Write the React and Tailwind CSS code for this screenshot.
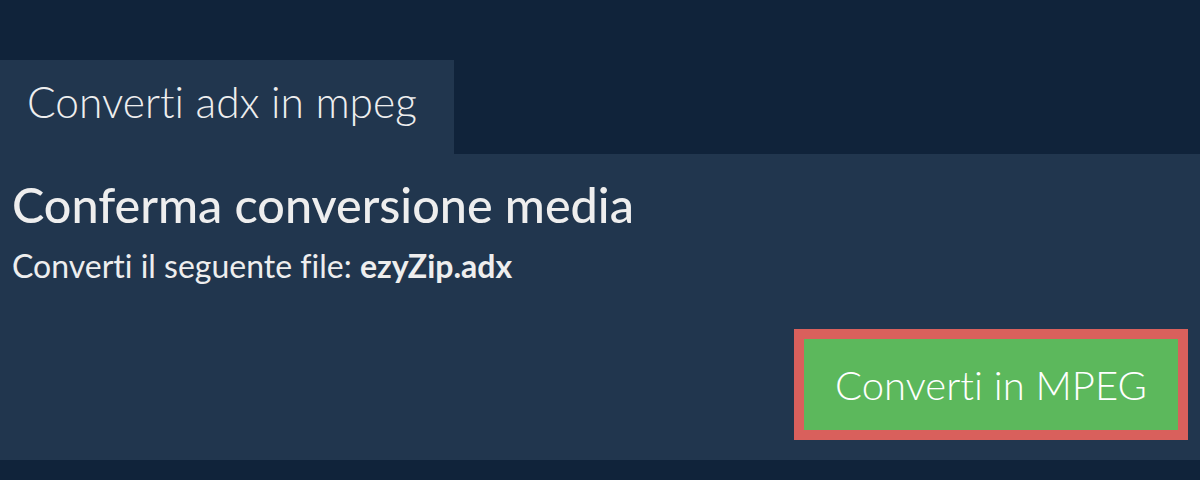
export default function App() {
  return (
    <div className="w-[1200px] h-[480px] bg-[#10233a] pt-[60px] font-['Lato',sans-serif] [font-variant-ligatures:none] text-[#eeeeee] overflow-hidden">
      <div className="flex">
        <div className="w-[454px] h-[94px] bg-[#21364e] pl-[27px] pt-[14px] text-[42.5px] font-light leading-[56px]">
          Converti adx in mpeg
        </div>
      </div>
      <div className="bg-[#21364e] h-[306px] px-[12px] pt-[20px]">
        <h1 className="text-[48.5px] font-medium leading-[60px]">Conferma conversione media</h1>
        <p className="mt-[12px] text-[32px] font-normal leading-[40px]">
          Converti il seguente file: <span className="font-bold">ezyZip.adx</span>
        </p>
        <div className="flex justify-end mt-[43px]">
          <button className="w-[394px] h-[111px] border-[10px] border-[#d9605c] bg-[#5cb85c] text-white text-[40px] font-light">
            Converti in MPEG
          </button>
        </div>
      </div>
    </div>
  );
}
